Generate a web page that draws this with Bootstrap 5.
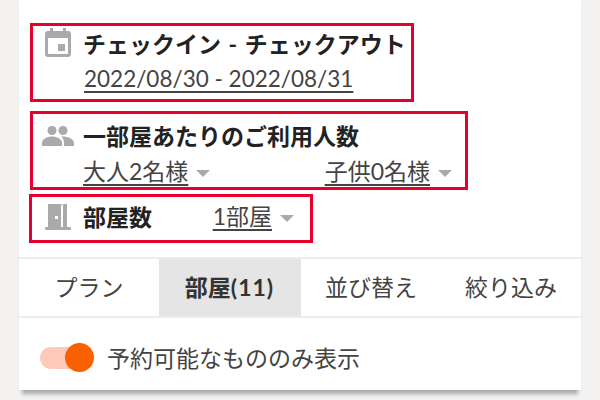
<!DOCTYPE html>
<html lang="ja">
<head>
  <meta charset="utf-8"/>
  <title>予約</title>
  <link href="https://cdn.jsdelivr.net/npm/bootstrap@5.3.0/dist/css/bootstrap.min.css" rel="stylesheet"/>
  <style>
    html, body { height: 100%; overflow: hidden; }
    body {
      background-color: #f3f2f0;
      color: #333;
      font-family: Lato, "Noto Sans CJK JP", sans-serif;
    }
    .panel {
      width: 562px;
      height: 390px;
      margin-left: 19px;
      background: #fff;
      box-shadow: 0 7px 4px -3px #aaa;
    }
    .search-area { padding: 23px 0 0 11px; height: 257px; }
    .red-box { border: 3px solid #e8002d; }
    .box-date { width: 384px; height: 79px; margin-bottom: 9px; }
    .box-people { width: 438px; height: 79px; padding-right: 13px; margin-bottom: 4px; }
    .box-room { width: 284px; height: 49px; margin-left: -1px; padding: 0 16px 3px 1px; }
    .field-icon { width: 50px; flex: none; display: flex; justify-content: center; align-items: flex-start; }
    .box-date .field-icon { padding-top: 2px; }
    .box-people .field-icon { padding-top: 12px; }
    .field-body { margin-left: 0; }
    .box-date .field-body { padding-top: 3px; }
    .box-people .field-body { padding-top: 7px; }
    .field-title { font-size: 23px; font-weight: 700; color: #222; line-height: 30px; white-space: nowrap; }
    .title-range { word-spacing: 2px; }
    .field-value { font-size: 23px; line-height: 24px; color: #444; text-decoration: underline; text-underline-offset: 4px; white-space: nowrap; }
    .value-date { font-size: 22.5px; margin-left: 1px; }
    .value-row-date { margin-top: 8px; }
    .value-row { margin-top: 8px; line-height: 24px; }
    .caret-down {
      display: inline-block;
      border-left: 7px solid transparent;
      border-right: 7px solid transparent;
      border-top: 7px solid #aaa;
      margin-left: 8px;
      vertical-align: 3px;
    }
    .tab-row { height: 61px; border-top: 2px solid #ededed; border-bottom: 2px solid #ededed; }
    .tab-cell { width: 140px; font-size: 23px; color: #444; }
    .tab-active { background: #e5e5e5; font-weight: 700; font-size: 23px; color: #333; width: 141px; }
    .tab-count { letter-spacing: 1px; }
    .tab-border { border-left: 1px solid #e5e5e5; width: 141px; }
    .toggle-row { height: 72px; padding: 8px 0 0 21px; font-size: 23px; color: #444; }
    .toggle-track { width: 50px; height: 22px; border-radius: 11px; background: #ffc9ba; position: relative; margin-right: 17px; }
    .toggle-knob { position: absolute; right: -4px; top: -4px; width: 29px; height: 29px; border-radius: 50%; background: #f96000; }
  </style>
</head>
<body>
  <div class="panel">
    <div class="search-area">
      <div class="red-box box-date d-flex">
        <div class="field-icon">
          <svg width="26" height="29" viewBox="0 0 26 29"><path fill="#aaa" fill-rule="evenodd" d="M3 3h2V0h3v3h10V0h3v3h2a3 3 0 0 1 3 3v20a3 3 0 0 1-3 3H3a3 3 0 0 1-3-3V6a3 3 0 0 1 3-3zm0 7v16h20V10z"/><rect x="13" y="16" width="7" height="7" fill="#aaa"/></svg>
        </div>
        <div class="field-body">
          <div class="field-title title-range">チェックイン - チェックアウト</div>
          <div class="field-value value-date value-row-date">2022/08/30 - 2022/08/31</div>
        </div>
      </div>

      <div class="red-box box-people d-flex">
        <div class="field-icon">
          <svg width="32" height="20" viewBox="0 0 32 20"><circle cx="10" cy="4.5" r="4.5" fill="#aaa"/><circle cx="21" cy="4.5" r="4.5" fill="#aaa"/><path fill="#aaa" d="M0 20v-3c0-4 5-6.500 10-6.500s10 2.500 10 6.500v3z"/><path fill="#aaa" d="M22 20v-3c0-3-1-5-3-6.500 6-.5 13 2 13 6.500v3z"/></svg>
        </div>
        <div class="field-body flex-grow-1">
          <div class="field-title">一部屋あたりのご利用人数</div>
          <div class="value-row d-flex justify-content-between">
            <span><span class="field-value">大人2名様</span><span class="caret-down"></span></span>
            <span><span class="field-value">子供0名様</span><span class="caret-down"></span></span>
          </div>
        </div>
      </div>

      <div class="red-box box-room d-flex align-items-center">
        <div class="field-icon">
          <svg width="26" height="26" viewBox="0 0 26 26"><rect x="3" y="0" width="13" height="24" fill="#aaa"/><rect x="18" y="0" width="4" height="24" fill="#aaa"/><rect x="16" y="0" width="3" height="1.500" fill="#ccc"/><rect x="0" y="23" width="26" height="3" rx="1" fill="#aaa"/><rect x="10" y="12" width="3" height="3" fill="#fff"/></svg>
        </div>
        <div class="field-body field-title">部屋数</div>
        <div class="ms-auto"><span class="field-value">1部屋</span><span class="caret-down"></span></div>
      </div>
    </div>

    <div class="tab-row d-flex">
      <div class="tab-cell d-flex align-items-center justify-content-center">プラン</div>
      <div class="tab-active d-flex align-items-center justify-content-center"><span>部屋<span class="tab-count">(11)</span></span></div>
      <div class="tab-cell tab-border d-flex align-items-center justify-content-center">並び替え</div>
      <div class="tab-cell d-flex align-items-center justify-content-center">絞り込み</div>
    </div>

    <div class="toggle-row d-flex align-items-center">
      <div class="toggle-track"><div class="toggle-knob"></div></div>
      <span>予約可能なもののみ表示</span>
    </div>
  </div>

  <script src="https://cdn.jsdelivr.net/npm/bootstrap@5.3.0/dist/js/bootstrap.bundle.min.js"></script>
</body>
</html>
